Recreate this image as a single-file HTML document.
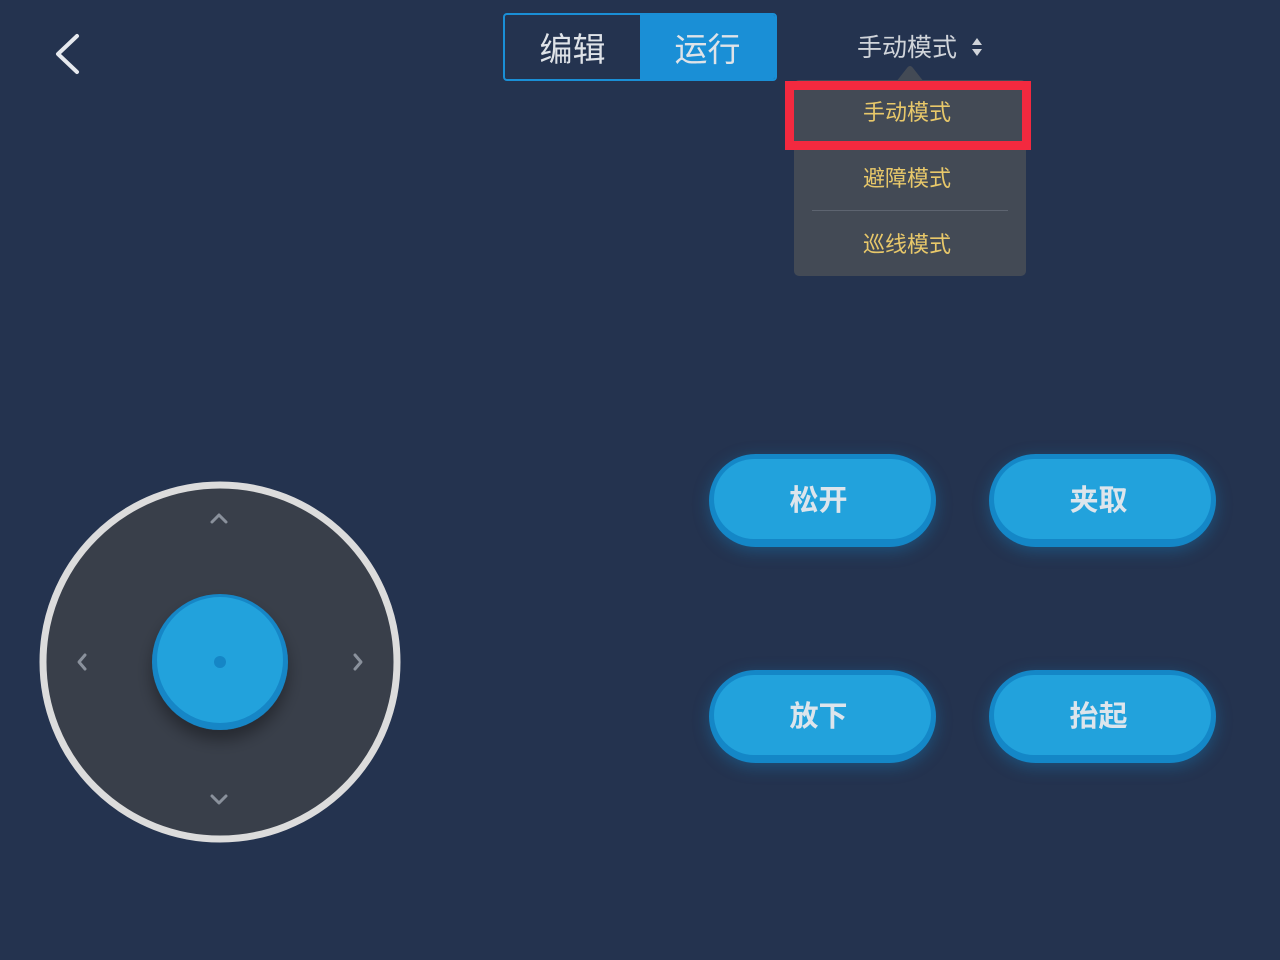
<!DOCTYPE html>
<html><head><meta charset="utf-8"><style>
*{margin:0;padding:0;box-sizing:border-box}
body{width:1280px;height:960px;background:#24334f;position:relative;overflow:hidden;font-family:"Liberation Sans","Noto Sans CJK SC",sans-serif}
.abs{position:absolute}
.seg{left:503px;top:13px;width:274px;height:68px;border:2px solid #1a8fd6;border-radius:4px;display:flex;overflow:hidden}
.seg div{flex:1;display:flex;align-items:center;justify-content:center;font-size:33px;color:#dfe3e8}
.seg .on{background:#1a8fd6}
.mode{left:857px;top:28px;font-size:25px;color:#d0d4da}
.menu{left:794px;top:80px;width:232px;height:196px;background:#434a55;border-radius:5px}
.item{position:absolute;left:-3px;width:232px;text-align:center;font-size:22px;color:#e8c86a}
.btn{width:227px;height:93px;border-radius:47px;background:#1487c7;box-shadow:0 4px 16px rgba(20,140,210,.35);display:flex;align-items:center;justify-content:center}
.btn::before{content:"";position:absolute;left:5px;right:5px;top:5px;bottom:8px;border-radius:42px;background:#22a2dc}
.btn span{position:relative;font-size:29px;color:#dde5ec;font-weight:bold;margin:-5px 8px 0 0}
</style></head><body>
<svg class="abs" style="left:50px;top:32px" width="36" height="46"><path d="M27 4 L8 22 L27 40" stroke="#e6e9ee" stroke-width="4" fill="none" stroke-linecap="round" stroke-linejoin="round"/></svg>
<div class="abs seg"><div>编辑</div><div class="on">运行</div></div>
<div class="abs mode">手动模式</div>
<svg class="abs" style="left:970px;top:37px" width="14" height="20"><path d="M7 1L12 8H2Z M7 19L12 12H2Z" fill="#d0d4da"/></svg>
<svg class="abs" style="left:896px;top:64px" width="28" height="18"><path d="M0 18L11 4Q14 0 17 4L28 18Z" fill="#434a55"/></svg>
<div class="abs menu">
<div class="item" style="top:15px">手动模式</div>
<div class="item" style="top:81px">避障模式</div>
<div class="abs" style="left:18px;top:130px;width:196px;height:1px;background:#5d6470"></div>
<div class="item" style="top:147px">巡线模式</div>
</div>
<div class="abs" style="left:785px;top:81px;width:246px;height:69px;border:9px solid #f3293f"></div>
<div class="abs btn" style="left:709px;top:454px"><span>松开</span></div>
<div class="abs btn" style="left:989px;top:454px"><span>夹取</span></div>
<div class="abs btn" style="left:709px;top:670px"><span>放下</span></div>
<div class="abs btn" style="left:989px;top:670px"><span>抬起</span></div>
<svg class="abs" style="left:0;top:440px" width="440" height="440">
<defs><filter id="sh" x="-50%" y="-50%" width="200%" height="200%"><feDropShadow dx="0" dy="10" stdDeviation="8" flood-color="#000" flood-opacity=".35"/></filter></defs>
<circle cx="220" cy="222" r="177" fill="#393f4a" stroke="#dcdcdc" stroke-width="7"/>
<circle cx="220" cy="222" r="68" fill="#1586c6" filter="url(#sh)"/>
<circle cx="220" cy="220" r="63" fill="#22a2dc"/>
<circle cx="220" cy="222" r="6" fill="#1586c6"/>
<g stroke="#8a919c" stroke-width="3" fill="none" stroke-linecap="round" stroke-linejoin="round">
<path d="M212 82L219 75L226 82"/><path d="M212 356L219 363L226 356"/>
<path d="M85 215L79 222L85 229"/><path d="M355 215L361 222L355 229"/></g>
</svg>
</body></html>
